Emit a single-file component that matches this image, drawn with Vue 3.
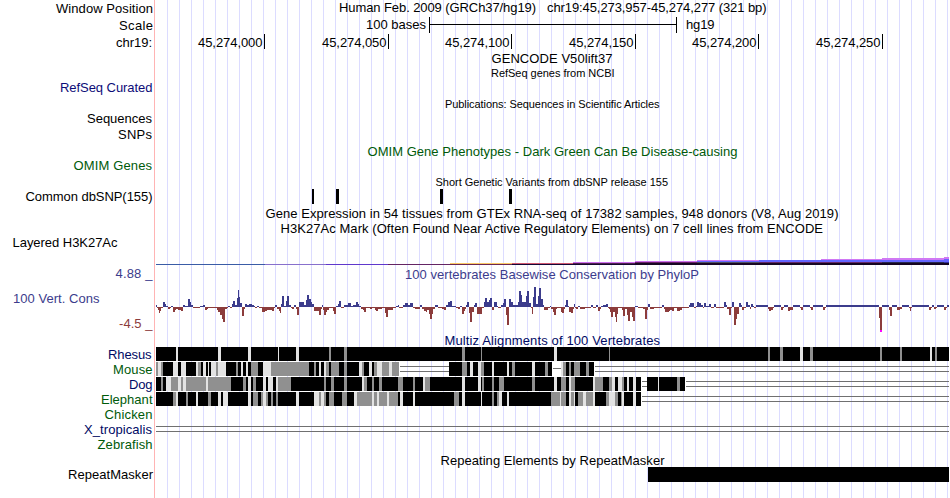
<script setup>
// Positions inside tracks are stored in thirds of a pixel, grouped by a pixel base.
const END = 949

function expand(groups) {
  const out = []
  for (const [base, text] of groups) {
    for (const token of text.trim().split(/\s+/)) {
      const m = token.match(/^([a-z]?)(\d+)(?::(-?\d+))?$/)
      out.push({ x: base + Number(m[2]) / 3, kind: m[1], value: Number(m[3] || 0) })
    }
  }
  return out.map((s, i) => ({ ...s, w: (i + 1 < out.length ? out[i + 1].x : END) - s.x }))
}

const NAVY = '#000a64'
const GREEN = '#005a0a'
const BLUE = '#3c3c8c'
const RED = '#8c3c3c'
const BLACK = '#000'

// text, x, baseline, width, colour, small
const t = (s, x, y, w, fill = BLACK, small = false) => ({ s, x, y, w, fill, small })
const box = (x, y, w, h, fill = BLACK) => ({ x, y, w, h, fill })

const ticks = [264, 388, 511, 635, 758, 882]
const tickNames = ['45,274,000', '45,274,050', '45,274,100', '45,274,150', '45,274,200', '45,274,250']

const conservation = expand([
  [150, '18:2 21:-1 24:-3 27:-6 30:-4 33:-1 39:5 45:3 48:1 54:-2 60:-1 63:1 69:-5 75:-3 78:-2 84:-3 93:-4 99:2 105:1 114:8 120:5 123:2 129:-1 150:1 159:2 165:-3 171:-2 174:-1 201:-3 204:-5 210:-8 216:-12 219:-15 225:-2 231:-1 234:1 240:-1 246:3 249:6 255:2 261:9 264:17 267:10 270:4 276:-9 282:-2 285:3 291:2 297:3 306:2 312:1 315:-1 321:1 327:-1 336:-5 345:-4 351:-3 366:-4 372:-1 375:2 381:-2 387:-4 390:-6 393:3 396:11 402:1 408:6 411:11 417:2 423:-1 426:-2 432:2 438:-2 441:-8 447:5 462:2 468:7 471:12 477:8 483:5 486:3 492:-4 507:-8 513:-2 516:2 519:-3 522:-8 528:-5 531:-3 537:-1 549:-4 552:-7 558:1 564:3 567:6 573:-1 582:2 594:4'],
  [350, '0:4 3:1 9:2 18:5 24:3 27:1 33:-2 39:-3 42:-5 48:-1 60:-2 66:-1 75:-3 78:-4 84:-2 96:-1 105:-6 108:-10 114:-3 129:-1 138:1 144:2 147:-1 159:2 165:4 174:2 180:4 189:-1 195:-2 210:2 216:-2 222:-4 228:-5 231:-3 237:-7 240:-12 246:-7 249:-2 255:2 264:-1 276:-2 282:-3 288:2 294:5 300:6 306:1 318:-1 324:-2 330:1 336:-7 342:-4 345:-2 348:2 351:5 357:-6 360:-15 366:-5 372:2 375:4 381:-7 396:-1 402:5 405:9 411:5 417:7 420:9 426:-3 432:5 441:1 444:-1 453:2 459:4 462:8 468:-8 471:-18 477:8 483:5 489:2 504:5 507:16 513:12 516:5 528:11 531:16 537:4 543:-1 546:-7 549:10 552:20 558:3 564:11 567:19 573:8 579:2 582:-3 594:-1'],
  [550, '0:1 3:-2 9:-5 12:-8 18:-2 21:-1 33:-5 36:-6 42:-2 45:2 48:7 54:1 57:-5 63:-6 69:-2 72:3 75:-1 78:-2 84:1 90:-2 105:-1 123:2 129:-1 138:2 144:-4 150:-2 153:1 159:2 168:3 174:-1 177:-2 180:-5 183:-10 189:-5 195:-10 198:-15 201:-7 204:-1 216:-3 219:-9 225:-2 231:-8 234:-14 240:-5 246:-10 249:-14 255:1 264:-1 279:-2 285:-12 291:-3 294:3 300:-2 312:-1 336:2 342:-2 345:-5 357:-4 360:-3 366:-4 372:-1 381:-4 390:-3 396:-1 417:2 420:4 432:-1 438:1 441:5 447:4 453:2 459:-1 462:4 468:1 477:3 483:-1 492:3 498:-1 522:5 528:2 531:-2 537:-8 543:-1 546:5 552:-18 558:-12 561:-7 567:4 573:2 576:-3 582:-1 588:5 594:2'],
  [750, '0:-2 3:3 9:1 12:-1 18:2 54:-2 57:-4 63:-3 69:-1 72:2 93:-3 99:-1 102:2 114:-4 120:-3 129:2 150:-1 153:-3 159:2 180:-1 183:-3 189:2 219:-3 225:-1 228:2 387:-11 390:-25 396:2 417:-3 420:-9 426:2 441:-3 450:-2 456:2 477:-1 480:-4 483:-1 486:2 537:-3 543:-1 546:2 552:-2 558:-1 561:2 582:-3 588:-1 591:2'],
]).map((s) => box(s.x, s.value > 0 ? 307 - s.value : 307, s.w, Math.abs(s.value), s.value > 0 ? BLUE : RED))

// h3k27ac signal layers: x, y, width, height, colour
const histone = [
  box(156, 264, 109, 1, '#3a5ca6'), box(265, 264, 61, 1, '#8870cc'), box(326, 264, 62, 1, '#6038cc'),
  box(388, 264, 62, 1, '#642464'), box(450, 263, 62, 1, '#fac864'), box(450, 264, 62, 1, '#6c2850'),
  box(512, 263, 61, 1, '#d05870'), box(512, 264, 61, 1, '#140838'), box(573, 262, 62, 1, '#cc70ee'),
  box(573, 263, 62, 1, '#502050'), box(573, 264, 62, 1, '#160630'), box(635, 261, 62, 1, '#cc70ee'),
  box(635, 262, 62, 1, '#682068'), box(635, 263, 62, 2, '#180824'), box(697, 260, 62, 1, '#d078f4'),
  box(697, 261, 62, 1, '#6464ff'), box(697, 262, 62, 1, '#505060'), box(697, 263, 124, 2, '#180824'),
  box(759, 260, 62, 2, '#6464ff'), box(759, 262, 62, 1, '#642868'), box(821, 259, 61, 1, '#d078f4'),
  box(821, 260, 61, 2, '#6464ff'), box(821, 262, 61, 1, '#642868'), box(821, 263, 128, 2, '#140420'),
  box(882, 258, 62, 2, '#d078f4'), box(882, 260, 62, 2, '#6464ff'), box(882, 262, 62, 1, '#282850'),
  box(944, 257, 5, 2, '#d078f4'), box(944, 259, 5, 3, '#6464ff'), box(944, 262, 5, 1, '#3030a0'),
]

const shades = { k: BLACK, g: '#909090', l: '#e3e3e3' }
function alignment(top, groups) {
  const out = []
  for (const s of expand(groups)) {
    if (s.kind === 'd') {
      out.push(box(s.x, top + 4, s.w, 1, '#707070'), box(s.x, top + 9, s.w, 1, '#707070'))
    } else if (s.kind === 's') {
      out.push(box(s.x, top + 6, s.w, 1, '#707070'))
    } else if (shades[s.kind]) {
      out.push(box(s.x, top, s.w, 14, shades[s.kind]))
    }
  }
  return out
}

const rhesus = alignment(347, [
  [150, 'k18 l78 k84 l204 k213 l294 k303 l384 k387 l438 k447 g537 k543 g582 k591'],
  [350, 'g336 k345 g393 k396'],
  [550, 'l12 k21 g177 k180'],
  [750, 'g54 k60 g90 k99 l150 k159 g180 k189 g390 k396 g450 k456 l540 k546 g555 k561'],
])
const mouse = alignment(362, [
  [150, 'g18 l24 g33 k39 l69 k84 l93 k108 l138 g144 k153 l159 k168 l174 k177 l183 g198 l204 k228 g258 k264 l273 k279 l288 k294 g303 k324 l339 g363 k477 g492 k498 l507 k513 l522 g528 k537 g543 k567 g582 k591'],
  [350, 'l27 g36 k42 l57 k66 g72 l81 g96 l117 g126 n147 d150 k297 g336 k351 l360 k369 l384 g393 k402 l426 k432 l471 k477 g486 k495 l546 k555 g585 k594'],
  [550, 'n6 s9 l33 g39 k48 g57 k63 g72 k90 g108 k117 n132 d135'],
])
const dog = alignment(377, [
  [150, 'k18 g33 k39 l48 g63 l84 g93 l99 g108 l168 g174 k243 g279 k288 l294 k303 g309 k318 l339 k348 l354 k369 l378 g384 k423 g522 k528 g543 k552 g582 k591'],
  [350, 'l36 g42 k51 g66 k72 g87 k96 g144 k159 g189 k195 l219 g225 k240 l336 k345 l384 k393 g396 k402 g426 k432 g447 k462 g546 k555'],
  [550, 'l12 k21 g33 k48 l57 g63 k75 l129 g135 k159 g177 l186 k195 l204 g216 k222 l231 k237 l249 k258 n273 d276 k291 l324 k327 g381 k390 n405 d408'],
])
const elephant = alignment(392, [
  [150, 'k18 g69 l78 k84 g108 k114 l138 k144 g174 k183 l204 k213 l219 k234 l294 k303 g309 k324 g333 l339 g348 k354 g363 k369 g378 k384 l438 k447 l492 g507 l513 g522 k528 g537 k552 g576 k591'],
  [350, 'l12 g21 l66 g72 l81 g87 l111 g117 k144 l150 k159 l189 k195 g312 k327 l336 k345 l393 k396 g426 k432 g441 l447 k456 l471 k477'],
  [550, 'k0 g3 l30 g33 k48 l57 g63 l72 k75 g84 l99 g108 l129 k135 g168 l177 g195 k204 g213 l216 k222 l249 k258 n273 d276'],
])
const frog = alignment(422, [[150, 'd18']])

const rows = [
  { h: 17, texts: [t('Window Position', 56, 13, 97), t('Human Feb. 2009 (GRCh37/hg19)', 339, 12, 197), t('chr19:45,273,957-45,274,277 (321 bp)', 547, 12, 219.5)] },
  { h: 17, texts: [t('Scale', 119, 30, 34), t('100 bases', 366, 29, 60), t('hg19', 686, 29, 28.5)], boxes: [box(429, 17, 1, 16), box(676, 17, 1, 16), box(429, 24, 248, 1)] },
  { h: 16, texts: [t('chr19:', 116, 47, 36), ...tickNames.map((n, i) => t(n, ticks[i] - 66, 47, 64.5))], boxes: ticks.map((x) => box(x, 34, 1, 15)) },
  { h: 16, texts: [t('GENCODE V50lift37', 491.5, 63, 121)] },
  { h: 14, texts: [t('RefSeq genes from NCBI', 491, 77, 123.5, BLACK, true)] },
  { h: 16, texts: [t('RefSeq Curated', 60, 92, 92.5, '#0c0c78')] },
  { h: 15, texts: [t('Publications: Sequences in Scientific Articles', 445, 108, 214.5, BLACK, true)] },
  { h: 16, texts: [t('Sequences', 87, 123, 65)] },
  { h: 16, texts: [t('SNPs', 118, 139, 34)] },
  { h: 16, texts: [t('OMIM Gene Phenotypes - Dark Green Can Be Disease-causing', 367.5, 156, 370, GREEN)] },
  { h: 16, texts: [t('OMIM Genes', 73.5, 170, 78.5, GREEN)] },
  { h: 14, texts: [t('Short Genetic Variants from dbSNP release 155', 435.5, 186, 232.5, BLACK, true)] },
  { h: 16, texts: [t('Common dbSNP(155)', 25.5, 201, 127)], boxes: [box(312, 189, 2, 15), box(336, 189, 3, 15), box(440, 189, 3, 15), box(509, 189, 3, 15)] },
  { h: 16, texts: [t('Gene Expression in 54 tissues from GTEx RNA-seq of 17382 samples, 948 donors (V8, Aug 2019)', 265.5, 218, 573)] },
  { h: 15, texts: [t('H3K27Ac Mark (Often Found Near Active Regulatory Elements) on 7 cell lines from ENCODE', 280.5, 233, 542.5)] },
  { h: 30, texts: [t('Layered H3K27Ac', 12.5, 247, 105)], boxes: histone },
  { h: 67, texts: [t('4.88 _', 115.5, 278, 37, BLUE), t('100 Vert. Cons', 13, 303, 86.5, BLUE), t('-4.5 _', 119, 328, 33.5, RED), t('100 vertebrates Basewise Conservation by PhyloP', 405, 279, 294, BLUE)], boxes: [...conservation, box(880, 330, 2, 2, '#ff00ff')] },
  { h: 14, texts: [t('Multiz Alignments of 100 Vertebrates', 444.5, 345, 215.5, NAVY)] },
  { h: 15, texts: [t('Rhesus', 108, 359, 43.5, NAVY)], boxes: rhesus },
  { h: 15, texts: [t('Mouse', 113, 374, 39.5, GREEN)], boxes: mouse },
  { h: 15, texts: [t('Dog', 129, 389, 23.5, NAVY)], boxes: dog },
  { h: 15, texts: [t('Elephant', 101, 404, 51.5, GREEN)], boxes: elephant },
  { h: 15, texts: [t('Chicken', 104.5, 419, 48, GREEN)] },
  { h: 15, texts: [t('X_tropicalis', 84, 434, 68, NAVY)], boxes: frog },
  { h: 15, texts: [t('Zebrafish', 97.5, 449, 55, GREEN)] },
  { h: 15, texts: [t('Repeating Elements by RepeatMasker', 440.5, 465, 224)] },
  { h: 31, texts: [t('RepeatMasker', 68, 479, 85)], boxes: [box(648, 467, 301, 15)] },
]

let offset = 0
for (const row of rows) {
  row.top = offset
  offset += row.h
}
</script>

<template>
  <main class="browser">
    <svg v-for="row in rows" :key="row.top" class="track" width="950" :height="row.h" :viewBox="`0 ${row.top} 950 ${row.h}`">
      <rect v-for="(b, i) in row.boxes" :key="i" :x="b.x" :y="b.y" :width="b.w" :height="b.h" :fill="b.fill" shape-rendering="crispEdges" />
      <text v-for="label in row.texts" :key="label.s" :class="{ small: label.small }" :x="label.x" :y="label.y" :fill="label.fill" :textLength="label.w">{{ label.s }}</text>
    </svg>
  </main>
</template>

<style>
body {
  margin: 0;
  background: #fff;
}
</style>

<style scoped>
.browser {
  display: flex;
  flex-direction: column;
  width: 950px;
  height: 498px;
  overflow: hidden;
  background-image:
    linear-gradient(to right, transparent 154px, #ffb4b4 154px, #ffb4b4 155px, #fff 155px, #fff 167px, transparent 167px),
    linear-gradient(to right, #fff 154px, transparent 154px),
    repeating-linear-gradient(to right, transparent 0, transparent 11px, #dcdcff 11px, #dcdcff 12px);
}

.track {
  display: block;
  flex: none;
  overflow: visible;
  font-family: "Liberation Sans", Arial, sans-serif;
  font-size: 13px;
}

.small {
  font-size: 11px;
}
</style>
